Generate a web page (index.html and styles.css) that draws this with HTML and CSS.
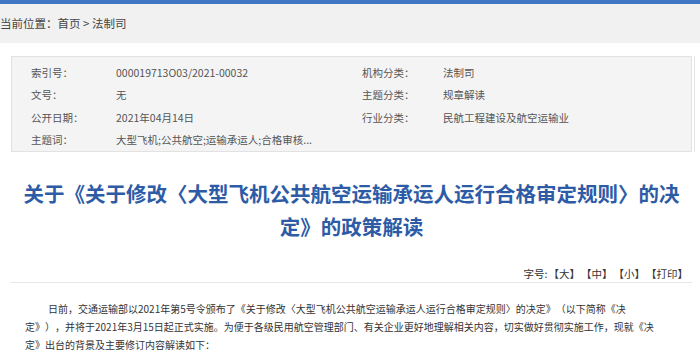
FILE: index.html
```html
<!doctype html>
<html lang="zh-CN">
<head>
  <meta charset="utf-8" />
  <meta name="viewport" content="width=device-width,initial-scale=1" />
  <title>法制司 - 政策解读</title>
  <link rel="stylesheet" href="styles.css">
</head>
<body>
  <div class="topBar"></div>

  <div class="crumbs">当前位置：<a href="#">首页</a> &gt; <a href="#">法制司</a></div>

  <div class="page">
    <!-- 信息公开元数据 -->
    <div class="meta">
      <div class="metaRow"><span class="k">索引号：</span><span class="v">000019713O03/2021-00032</span></div>
      <div class="metaRow"><span class="k">机构分类：</span><span class="v">法制司</span></div>
      <div class="metaRow"><span class="k">文号：</span><span class="v">无</span></div>
      <div class="metaRow"><span class="k">主题分类：</span><span class="v">规章解读</span></div>
      <div class="metaRow"><span class="k">公开日期：</span><span class="v">2021年04月14日</span></div>
      <div class="metaRow"><span class="k">行业分类：</span><span class="v">民航工程建设及航空运输业</span></div>
      <div class="metaRow"><span class="k">主题词：</span><span class="v">大型飞机;公共航空;运输承运人;合格审核...</span></div>
    </div>

    <h1 class="title">关于《关于修改〈大型飞机公共航空运输承运人运行合格审定规则〉的决定》的政策解读</h1>

    <div class="tools">字号:<a href="#">【大】</a><a href="#">【中】</a><a href="#">【小】</a><a href="#">【打印】</a></div>

    <div class="content">
      <p>日前，交通运输部以2021年第5号令颁布了《关于修改〈大型飞机公共航空运输承运人运行合格审定规则〉的决定》（以下简称《决<br>定》），并将于2021年3月15日起正式实施。为便于各级民用航空管理部门、有关企业更好地理解相关内容，切实做好贯彻实施工作，现就《决<br>定》出台的背景及主要修订内容解读如下：</p>
    </div>
  </div>
</body>
</html>
```

FILE: styles.css
```css
*{ box-sizing:border-box }
body{
  margin:0;
  font-family:"Noto Sans CJK SC", "Microsoft YaHei", sans-serif;
  color:#333;
  background:#fff;
  text-spacing-trim: space-all;
}
a{ color:inherit; text-decoration:none; }

.topBar{
  height:4px;
  background:#4077c4;
}

/* 面包屑 */
.crumbs{
  height:39px;
  line-height:39px;
  background:#f1f1f1;
  font-size:11.5px;
  color:#444;
  padding-left:0;
}

.page{
  padding:13px 8px 0 11px;
}

.meta{
  display:grid;
  grid-template-columns: 331px 1fr;
  height:96px;
  padding:5px 0 0 19px;
  background:#f4f4f4;
  border:1px solid #e2e2e2;
  box-shadow: 2px 0 0 #fff, 3px 0 0 #e6e6e6;
}
.metaRow{
  display:flex;
  height:22px;
  line-height:22px;
  font-size:10.5px;
  color:#555;
}
.metaRow .k{ width:85px; flex:none; }
.metaRow:nth-child(even) .k{ width:81px; }
.metaRow .v{ white-space:nowrap; }

.title{
  margin:25px -11px 0 -11px;
  padding:0 22px;
  text-align:center;
  font-size:20.5px;
  line-height:33px;
  font-weight:700;
  color:#2d5ba6;
}

.tools{
  display:flex;
  justify-content:flex-end;
  align-items:center;
  margin-top:22px;
  padding-right:4px;
  height:17px;
  font-size:10.5px;
  color:#333;
  border-bottom:1px solid #e6e6e6;
  box-sizing:content-box;
}
.tools a{ margin-left:1px; }

.content{
  padding:17px 6px 0 14px;
}
.content p{
  margin:0;
  font-size:10px;
  line-height:18px;
  text-indent:23px;
  color:#333;
}
```
